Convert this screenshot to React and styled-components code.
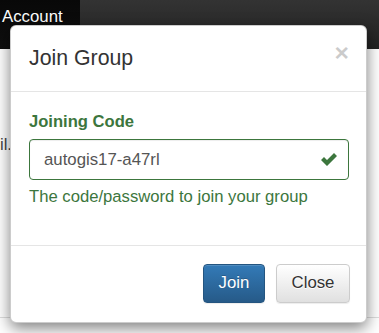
import React from "react";
import styled, { createGlobalStyle } from "styled-components";

const GlobalStyle = createGlobalStyle`
  html, body {
    margin: 0;
    padding: 0;
    background: #fff;
    font-family: "Liberation Sans", Arial, sans-serif;
    color: #333;
  }
  * {
    box-sizing: border-box;
  }
`;

const Page = styled.div`
  position: relative;
  width: 379px;
  height: 333px;
  overflow: hidden;
  background: #fff;
`;

const Navbar = styled.nav`
  display: flex;
  height: 49px;
  background: linear-gradient(to bottom, #333 0%, #222 100%);
`;

const NavLink = styled.a`
  display: block;
  width: 80px;
  padding: 7px 0 0 2px;
  font-size: 16.8px;
  line-height: 20px;
  color: #fff;
  text-decoration: none;
  background: linear-gradient(to bottom, #080808 0%, #0f0f0f 100%);
`;

const Content = styled.main`
  display: flex;
  flex-direction: column;
  padding-top: 84px;
`;

const Lead = styled.p`
  margin: 0;
  font-size: 16.6px;
  line-height: 23.5px;
  color: #444;
`;

const Rule = styled.hr`
  width: 100%;
  margin: 160px 0 0;
  border: 0;
  border-top: 1px solid #ddd;
`;

const Modal = styled.div`
  position: absolute;
  top: 25px;
  left: 10px;
  width: 357px;
  background: #fff;
  border: 1px solid rgba(0, 0, 0, 0.2);
  border-radius: 6px;
  box-shadow: 0 5px 15px rgba(0, 0, 0, 0.5);
  display: flex;
  flex-direction: column;
`;

const Header = styled.div`
  display: flex;
  justify-content: space-between;
  align-items: flex-start;
  padding: 17px 17px 18px 18px;
  border-bottom: 1px solid #e5e5e5;
`;

const Title = styled.h4`
  margin: 0;
  font-size: 21.3px;
  font-weight: normal;
  line-height: 30px;
  color: #333;
`;

const CloseX = styled.button`
  margin-top: -2.5px;
  padding: 0;
  border: 0;
  background: transparent;
  font-family: "Liberation Sans", Arial, sans-serif;
  font-size: 24.7px;
  font-weight: bold;
  line-height: 1;
  color: #000;
  opacity: 0.2;
  text-shadow: 0 1px 0 #fff;
  cursor: pointer;
`;

const Body = styled.div`
  padding: 17.5px 17px 17.5px 18px;
`;

const FormGroup = styled.div`
  display: flex;
  flex-direction: column;
  margin-bottom: 19px;
`;

const Label = styled.label`
  margin-bottom: 6px;
  font-size: 16.6px;
  font-weight: bold;
  line-height: 23.5px;
  color: #3c763d;
`;

const Field = styled.div`
  display: flex;
  align-items: center;
  gap: 8px;
  height: 41px;
  padding: 0 11px 0 14px;
  background: #fff;
  border: 1px solid #3c763d;
  border-radius: 4px;
  box-shadow: inset 0 1px 1px rgba(0, 0, 0, 0.075);
`;

const Input = styled.input`
  flex: 1;
  min-width: 0;
  height: 100%;
  margin: 0;
  padding: 0;
  font-family: "Liberation Sans", Arial, sans-serif;
  font-size: 16.8px;
  color: #555;
  background: transparent;
  border: 0;
  outline: none;
`;

const Feedback = styled.svg`
  flex: none;
  width: 16px;
  height: 13px;
  fill: #3c763d;
`;

const Help = styled.span`
  margin-top: 5px;
  font-size: 16.67px;
  line-height: 23.5px;
  color: #3c763d;
`;

const Footer = styled.div`
  display: flex;
  justify-content: flex-end;
  gap: 11px;
  padding: 18px 16px 19px;
  border-top: 1px solid #e5e5e5;
`;

const Button = styled.button`
  width: ${(p) => p.$width}px;
  height: 39px;
  padding: 0;
  font-family: "Liberation Sans", Arial, sans-serif;
  font-size: 16.8px;
  line-height: 1;
  border-radius: 4px;
  border: 1px solid ${(p) => (p.$primary ? "#245580" : "#ccc")};
  color: ${(p) => (p.$primary ? "#fff" : "#333")};
  background: ${(p) =>
    p.$primary
      ? "linear-gradient(to bottom, #337ab7 0%, #265a88 100%)"
      : "linear-gradient(to bottom, #fff 0%, #e0e0e0 100%)"};
  text-shadow: ${(p) =>
    p.$primary ? "0 -1px 0 rgba(0,0,0,.2)" : "0 1px 0 #fff"};
  box-shadow: inset 0 1px 0 rgba(255, 255, 255, 0.15),
    0 1px 1px rgba(0, 0, 0, 0.075);
  cursor: pointer;
`;

export default function App() {
  return (
    <Page>
      <GlobalStyle />
      <Navbar>
        <NavLink href="#">Account</NavLink>
      </Navbar>
      <Content>
        <Lead>il.</Lead>
        <Rule />
      </Content>

      <Modal role="dialog">
        <Header>
          <Title>Join Group</Title>
          <CloseX aria-label="Close">×</CloseX>
        </Header>
        <Body>
          <FormGroup>
            <Label htmlFor="code">Joining Code</Label>
            <Field>
              <Input id="code" readOnly defaultValue="autogis17-a47rl" />
              <Feedback viewBox="0 0 16 13">
                <path d="M0 7 L3 4 L6 7 L13 0 L16 3 L6 13 Z" />
              </Feedback>
            </Field>
            <Help>The code/password to join your group</Help>
          </FormGroup>
        </Body>
        <Footer>
          <Button $primary $width={62}>
            Join
          </Button>
          <Button $width={74}>Close</Button>
        </Footer>
      </Modal>
    </Page>
  );
}
